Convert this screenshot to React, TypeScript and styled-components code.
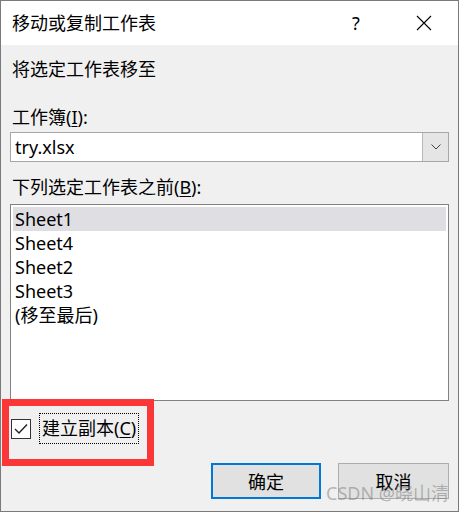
import React from "react";
import styled, { createGlobalStyle } from "styled-components";

const Global = createGlobalStyle`
  html, body { margin: 0; padding: 0; background: #ffffff; }
  * { box-sizing: border-box; }
`;

const FONT = `"Noto Sans", "Noto Sans CJK SC", sans-serif`;

const Window = styled.div`
  position: relative;
  width: 459px;
  height: 512px;
  border: 1px solid #7a7a7a;
  background: #f0f0f0;
  font-family: ${FONT};
  color: #000;
  display: flex;
  flex-direction: column;
  overflow: hidden;
`;

const TitleBar = styled.div`
  height: 44px;
  background: #ffffff;
  display: flex;
  align-items: center;
  padding-left: 11px;
  padding-right: 19px;
  font-size: 18px;
`;

const TitleText = styled.div`
  flex: 1;
  line-height: 24px;
`;

const TitleButton = styled.div<{ $w: number; $ml?: number }>`
  width: ${(p) => p.$w}px;
  margin-left: ${(p) => p.$ml ?? 0}px;
  height: 44px;
  display: flex;
  align-items: center;
  justify-content: center;
  font-size: 18px;
`;

const Body = styled.div`
  flex: 1;
  display: flex;
  flex-direction: column;
  padding: 0 9px 0 9px;
`;

const Label = styled.div<{ $mt: number }>`
  margin-top: ${(p) => p.$mt}px;
  font-size: 18px;
  line-height: 24px;
  padding-left: 2px;
  white-space: nowrap;
`;

const Key = styled.span`
  text-decoration: underline;
  text-underline-offset: 2px;
  text-decoration-thickness: 1px;
`;

const Combo = styled.div`
  margin-top: 3px;
  height: 30px;
  border: 1px solid #a7a7a7;
  background: #ffffff;
  display: flex;
`;

const ComboText = styled.div`
  flex: 1;
  font-size: 18px;
  line-height: 28px;
  padding-left: 4px;
`;

const ComboButton = styled.div`
  width: 26px;
  background: #e5e5e5;
  border-left: 1px solid #b8b8b8;
  display: flex;
  align-items: center;
  justify-content: center;
`;

const ListBox = styled.div`
  margin-top: 5px;
  height: 197px;
  border: 1px solid #828282;
  background: #ffffff;
  padding: 2px 2px;
`;

const ListItem = styled.div<{ $sel?: boolean }>`
  height: 24px;
  line-height: 24px;
  font-size: 18px;
  padding-left: 2px;
  background: ${(p) => (p.$sel ? "#dfdee3" : "transparent")};
`;

const CheckRow = styled.div`
  margin-top: 12px;
  height: 31px;
  display: flex;
  align-items: center;
  padding-left: 1px;
`;

const CheckBox = styled.div`
  width: 20px;
  height: 20px;
  border: 1px solid #333333;
  background: #ffffff;
  display: flex;
  align-items: center;
  justify-content: center;
`;

const CheckLabel = styled.div`
  margin-left: 8px;
  height: 31px;
  width: 100px;
  border: 1px dotted #000;
  font-size: 18px;
  line-height: 29px;
  padding-left: 2px;
  white-space: nowrap;
`;

const ButtonRow = styled.div`
  margin-top: 19px;
  display: flex;
  justify-content: flex-end;
  gap: 17px;
`;

const Button = styled.div<{ $primary?: boolean }>`
  width: ${(p) => (p.$primary ? 110 : 111)}px;
  height: 36px;
  background: #e1e1e1;
  border: ${(p) => (p.$primary ? "2px solid #0078d7" : "1px solid #adadad")};
  display: flex;
  align-items: center;
  justify-content: center;
  font-size: 18px;
`;

const Highlight = styled.div`
  position: absolute;
  left: 1px;
  top: 398px;
  width: 152px;
  height: 67px;
  border: 7px solid #fb3636;
  pointer-events: none;
`;

const Watermark = styled.div`
  position: absolute;
  left: 325px;
  top: 481px;
  font-size: 18px;
  line-height: 22px;
  color: rgba(120, 120, 120, 0.5);
  white-space: nowrap;
  font-family: ${FONT};
`;

export default function App() {
  return (
    <>
      <Global />
      <Window>
        <TitleBar>
          <TitleText>移动或复制工作表</TitleText>
          <TitleButton $w={40}>?</TitleButton>
          <TitleButton $w={30} $ml={33}>
            <svg width="16" height="16" viewBox="0 0 16 16">
              <path d="M1 1 L15 15 M15 1 L1 15" stroke="#000" strokeWidth="1.1" fill="none" />
            </svg>
          </TitleButton>
        </TitleBar>
        <Body>
          <Label $mt={12}>将选定工作表移至</Label>
          <Label $mt={24}>
            工作簿(<Key>I</Key>):
          </Label>
          <Combo>
            <ComboText>try.xlsx</ComboText>
            <ComboButton>
              <svg width="10" height="6" viewBox="0 0 10 6">
                <path d="M0.5 0.5 L5 5 L9.5 0.5" stroke="#444" strokeWidth="1" fill="none" />
              </svg>
            </ComboButton>
          </Combo>
          <Label $mt={13}>
            下列选定工作表之前(<Key>B</Key>):
          </Label>
          <ListBox>
            <ListItem $sel>Sheet1</ListItem>
            <ListItem>Sheet4</ListItem>
            <ListItem>Sheet2</ListItem>
            <ListItem>Sheet3</ListItem>
            <ListItem>(移至最后)</ListItem>
          </ListBox>
          <CheckRow>
            <CheckBox>
              <svg width="14" height="12" viewBox="0 0 14 12">
                <path d="M1 6 L5 10 L13 1.5" stroke="#222" strokeWidth="1.4" fill="none" />
              </svg>
            </CheckBox>
            <CheckLabel>
              建立副本(<Key>C</Key>)
            </CheckLabel>
          </CheckRow>
          <ButtonRow>
            <Button $primary>确定</Button>
            <Button>取消</Button>
          </ButtonRow>
        </Body>
        <Highlight />
        <Watermark>CSDN @晓山清</Watermark>
      </Window>
    </>
  );
}
